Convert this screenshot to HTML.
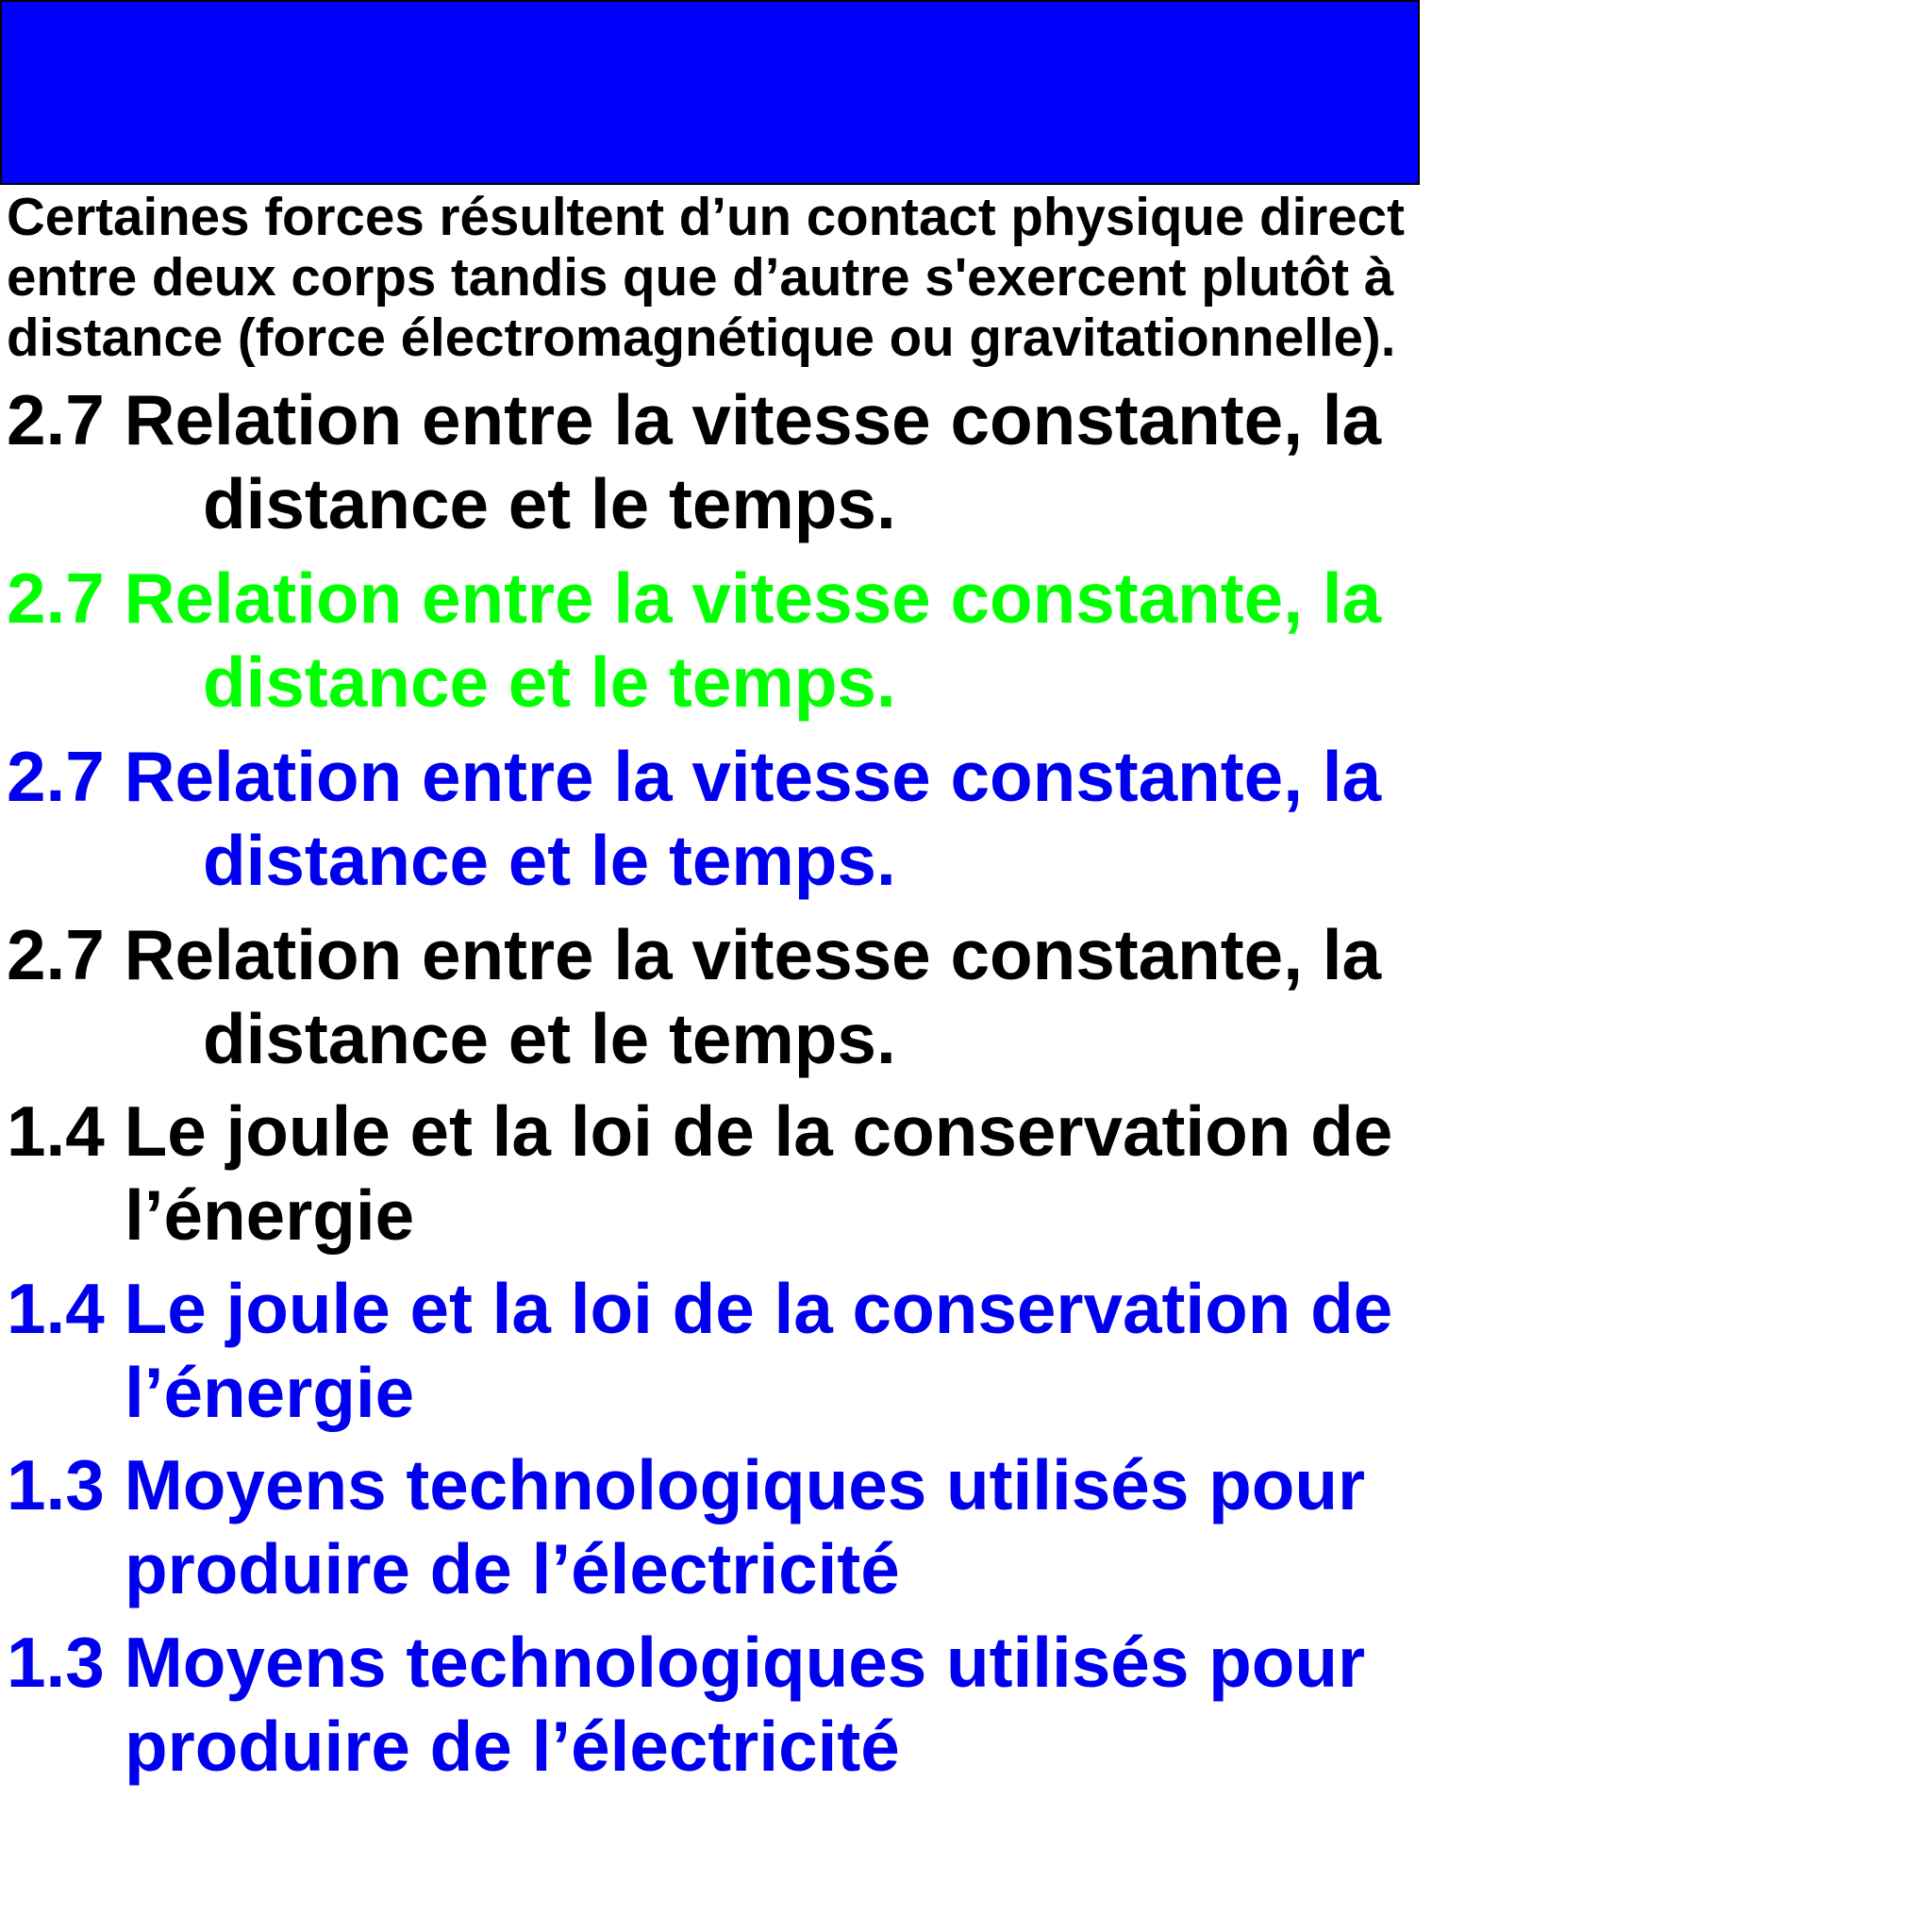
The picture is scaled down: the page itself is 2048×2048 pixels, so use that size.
<!DOCTYPE html>
<html><head><meta charset="utf-8"><style>
html,body{margin:0;padding:0;width:2048px;height:2048px;background:#fff;overflow:hidden}
body{position:relative;font-family:"Liberation Sans",Arial,sans-serif;font-weight:bold}
.box{position:absolute;left:0;top:0;width:1501px;height:192px;background:#0000ff;border:2px solid #000}
.p{position:absolute;left:7px;font-size:56.5px;line-height:56px;white-space:nowrap;color:#000}
.h{position:absolute;font-size:74.7px;line-height:74px;white-space:nowrap}
.k{color:#000}.g{color:#00ff00}.b{color:#0000ee}
</style></head><body>
<div class="box"></div>
<div class="p" style="top:202px">Certaines forces résultent d’un contact physique direct</div>
<div class="p" style="top:266px">entre deux corps tandis que d’autre s'exercent plutôt à</div>
<div class="p" style="top:330px">distance (force électromagnétique ou gravitationnelle).</div>

<div class="h k" style="left:7px;top:408px">2.7 Relation entre la vitesse constante, la</div>
<div class="h k" style="left:215px;top:497px">distance et le temps.</div>
<div class="h g" style="left:7px;top:597px">2.7 Relation entre la vitesse constante, la</div>
<div class="h g" style="left:215px;top:686px">distance et le temps.</div>
<div class="h b" style="left:7px;top:786px">2.7 Relation entre la vitesse constante, la</div>
<div class="h b" style="left:215px;top:875px">distance et le temps.</div>
<div class="h k" style="left:7px;top:975px">2.7 Relation entre la vitesse constante, la</div>
<div class="h k" style="left:215px;top:1064px">distance et le temps.</div>
<div class="h k" style="left:7px;top:1162px">1.4 Le joule et la loi de la conservation de</div>
<div class="h k" style="left:132px;top:1251px">l’énergie</div>
<div class="h b" style="left:7px;top:1350px">1.4 Le joule et la loi de la conservation de</div>
<div class="h b" style="left:132px;top:1439px">l’énergie</div>
<div class="h b" style="left:7px;top:1537px">1.3 Moyens technologiques utilisés pour</div>
<div class="h b" style="left:132px;top:1626px">produire de l’électricité</div>
<div class="h b" style="left:7px;top:1725px">1.3 Moyens technologiques utilisés pour</div>
<div class="h b" style="left:132px;top:1814px">produire de l’électricité</div>
</body></html>
